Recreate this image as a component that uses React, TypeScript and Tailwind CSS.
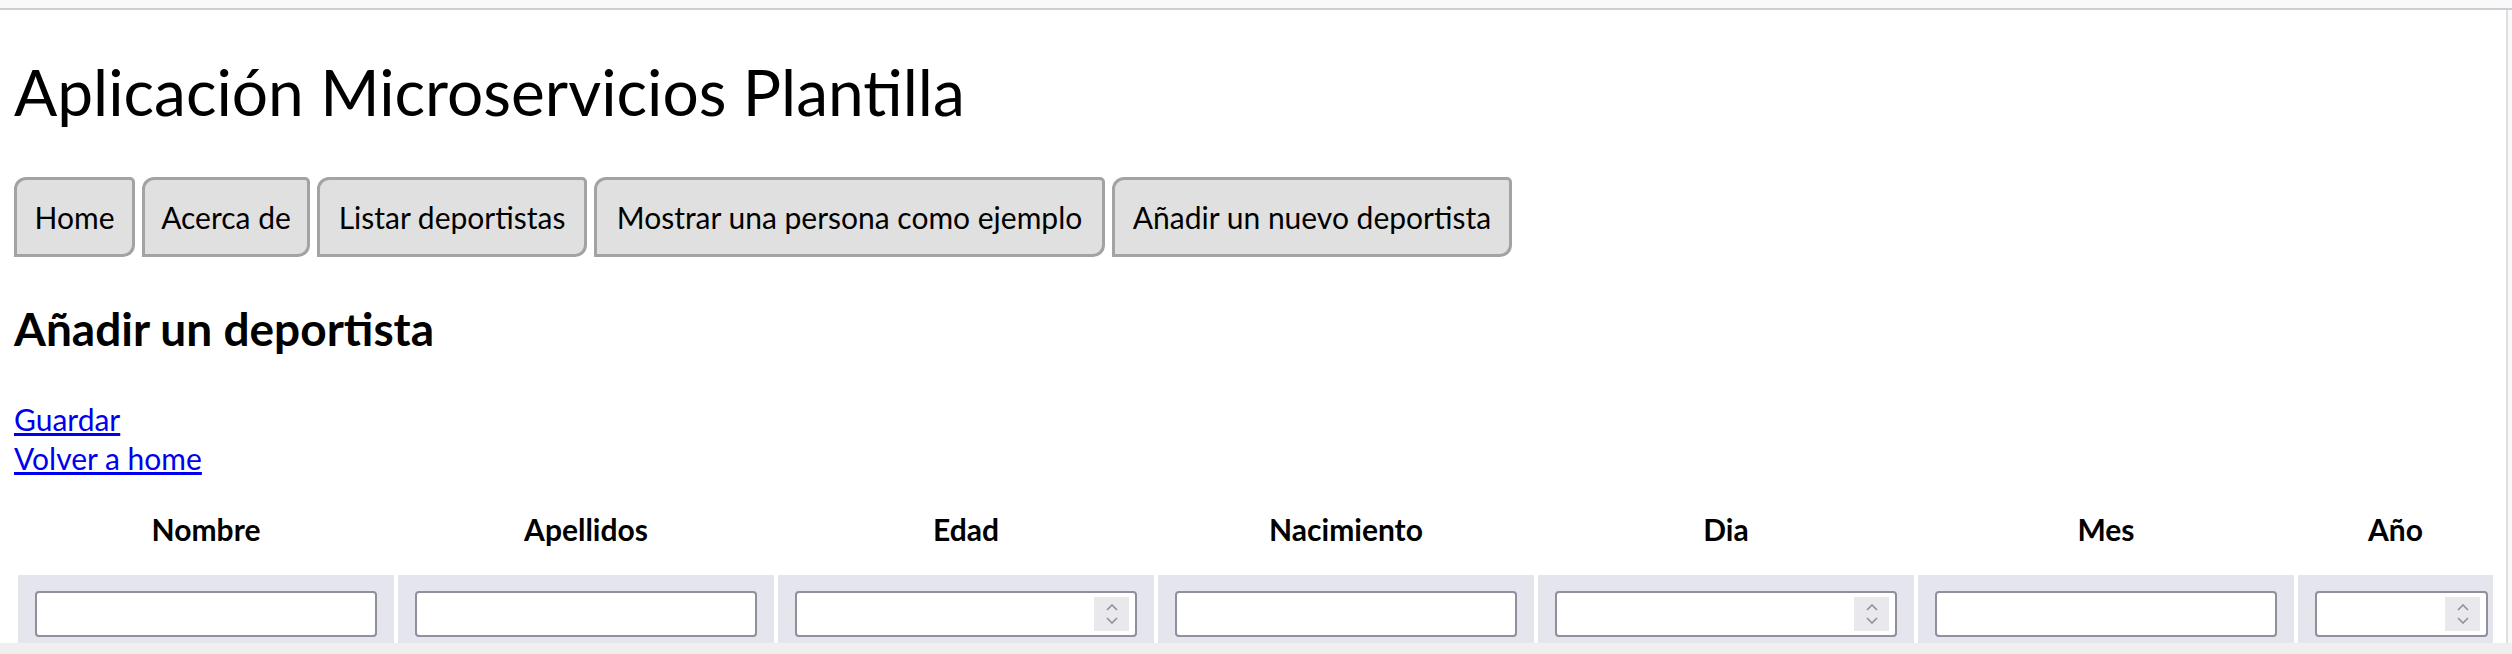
import React from 'react';

const navItems = [
  { label: 'Home', w: 'w-[121px]' },
  { label: 'Acerca de', w: 'w-[168px]' },
  { label: 'Listar deportistas', w: 'w-[270px]' },
  { label: 'Mostrar una persona como ejemplo', w: 'w-[511px]' },
  { label: 'Añadir un nuevo deportista', w: 'w-[400px]' },
];

const columns = [
  { label: 'Nombre', spin: false, w: 'w-[376px]', input: 'w-[342px]' },
  { label: 'Apellidos', spin: false, w: 'w-[376px]', input: 'w-[342px]' },
  { label: 'Edad', spin: true, w: 'w-[376px]', input: 'w-[342px]' },
  { label: 'Nacimiento', spin: false, w: 'w-[376px]', input: 'w-[342px]' },
  { label: 'Dia', spin: true, w: 'w-[376px]', input: 'w-[342px]' },
  { label: 'Mes', spin: false, w: 'w-[376px]', input: 'w-[342px]' },
  { label: 'Año', spin: true, w: 'w-[195px]', input: 'w-[173px]' },
];

const Spinner: React.FC = () => (
  <div className="absolute right-[8px] top-[6px] w-[35px] h-[34px] bg-[#e9e9ed] flex flex-col items-center justify-center gap-[6px]">
    <svg width="12" height="7" viewBox="0 0 12 7" fill="none">
      <path d="M1 6L6 1L11 6" stroke="#8f8f9d" strokeWidth="1.6" />
    </svg>
    <svg width="12" height="7" viewBox="0 0 12 7" fill="none">
      <path d="M1 1L6 6L11 1" stroke="#8f8f9d" strokeWidth="1.6" />
    </svg>
  </div>
);

const App: React.FC = () => {
  return (
    <div className="w-[2512px] h-[654px] bg-[#f9f9fb] flex flex-col overflow-hidden font-['Lato',sans-serif] text-black">
      <div className="h-[8px] shrink-0"></div>
      <div className="h-[2px] bg-[#cfcfcf] shrink-0"></div>

      <div className="flex h-[633px] shrink-0">
        <main className="w-[2506px] bg-white overflow-hidden pl-[14px]">
          {/* Title */}
          <h1 className="mt-[44px] text-[64px] leading-[76px] font-normal whitespace-nowrap">
            Aplicación Microservicios Plantilla
          </h1>

          {/* Nav */}
          <nav className="mt-[47px] flex gap-[7px]">
            {navItems.map(item => (
              <button
                key={item.label}
                className={`${item.w} h-[80px] shrink-0 flex items-center justify-center bg-[#e0e0e0] border-[3px] border-[#a3a3a3] rounded-tl-[12px] rounded-tr-[5px] rounded-br-[12px] rounded-bl-none text-[30px] leading-[36px] whitespace-nowrap`}
              >
                {item.label}
              </button>
            ))}
          </nav>

          <h2 className="mt-[45px] text-[46px] leading-[54px] font-bold whitespace-nowrap">Añadir un deportista</h2>

          <div className="mt-[44px] flex flex-col items-start text-[30px] leading-[39px]">
            <a href="#" className="text-[#0000ee] underline">Guardar</a>
            <a href="#" className="text-[#0000ee] underline">Volver a home</a>
          </div>

          {/* Form table */}
          <table className="mt-[4px] table-fixed border-separate border-spacing-[4px] w-[2483px]">
            <colgroup>
              {columns.map(c => (
                <col key={c.label} className={c.w} />
              ))}
            </colgroup>
            <thead>
              <tr>
                {columns.map(c => (
                  <th key={c.label} className="h-[85px] p-0 text-center align-middle text-[30px] leading-[36px] font-bold">
                    {c.label}
                  </th>
                ))}
              </tr>
            </thead>
            <tbody>
              <tr>
                {columns.map(c => (
                  <td key={c.label} className="bg-[#e5e5ee] pt-[16px] pl-[17px] pb-[16px] align-top">
                    <div className={`relative ${c.input} h-[46px]`}>
                      <input
                        type="text"
                        className="w-full h-full bg-white border-2 border-[#8f8f9d] rounded-[4px] outline-none"
                      />
                      {c.spin && <Spinner />}
                    </div>
                  </td>
                ))}
              </tr>
            </tbody>
          </table>
        </main>
        <div className="w-[2px] bg-[#dedede] shrink-0"></div>
      </div>

      <div className="h-[11px] bg-[#efefef] shrink-0"></div>
    </div>
  );
};

export default App;
